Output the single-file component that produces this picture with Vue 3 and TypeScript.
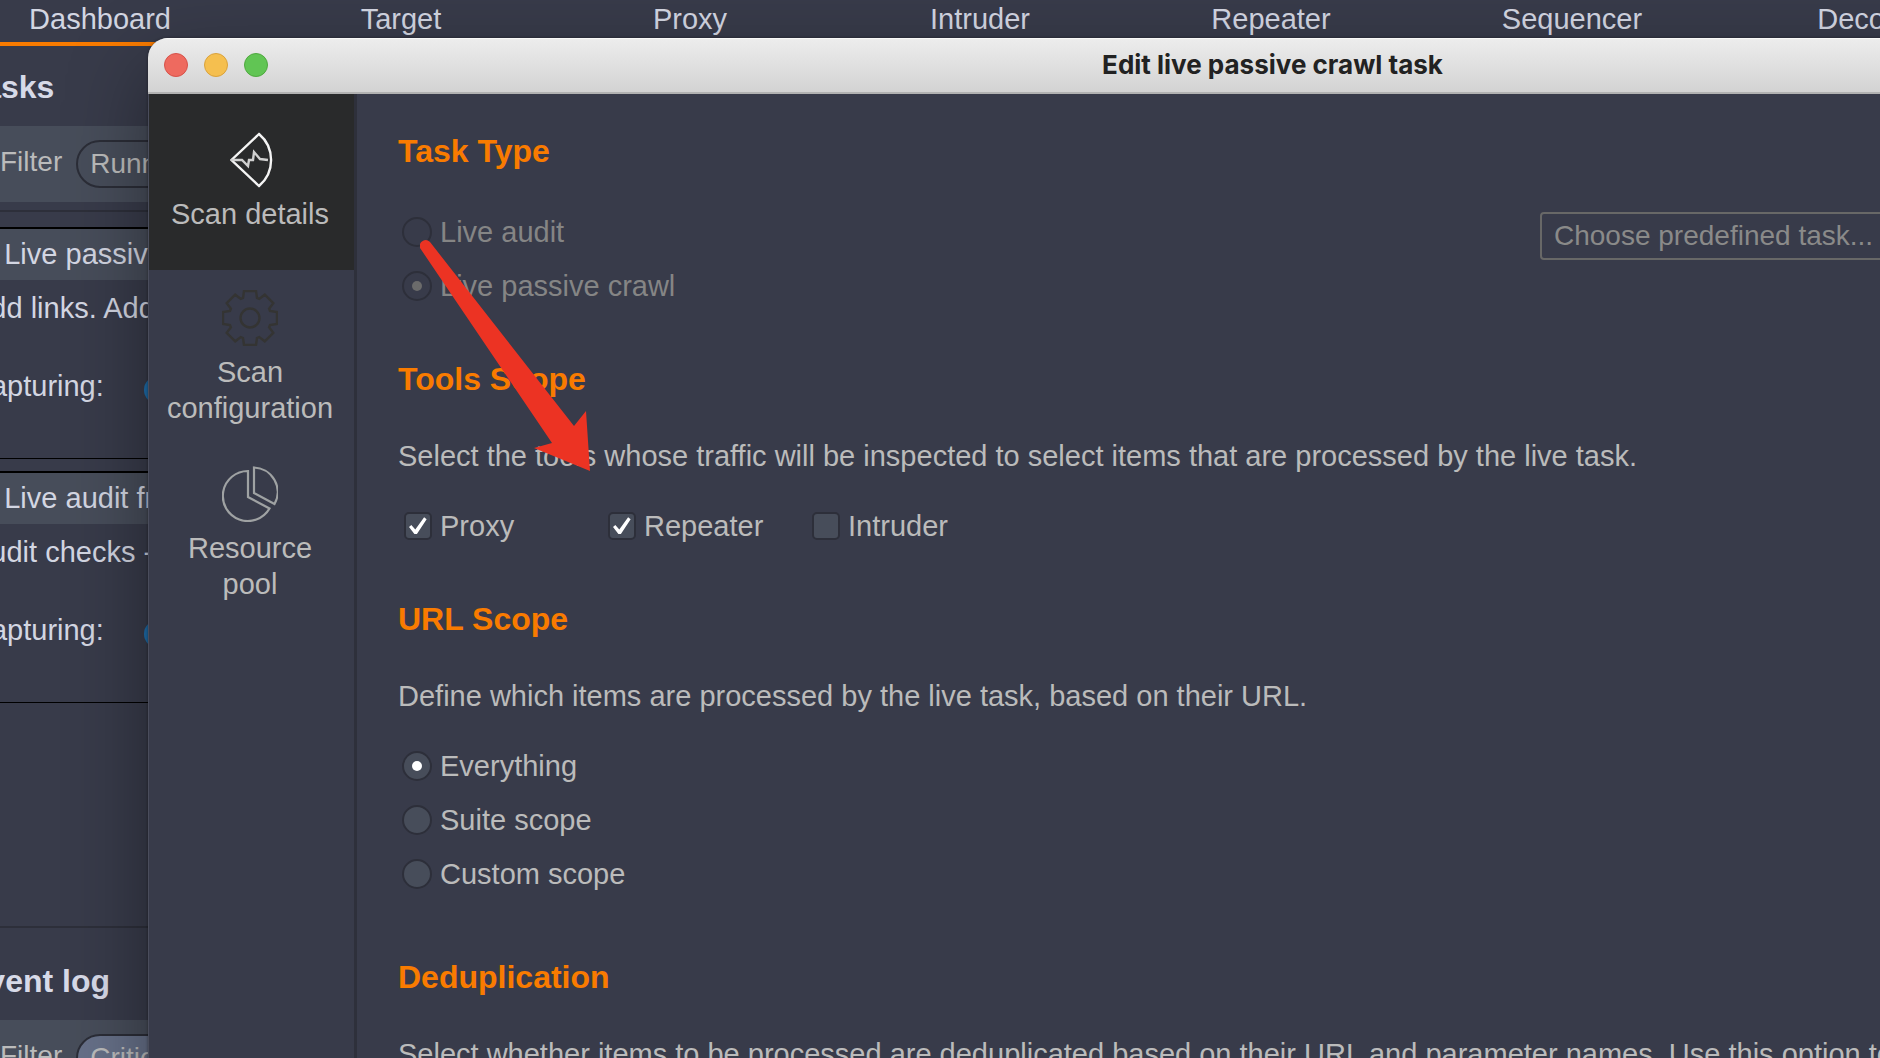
<script setup lang="ts">
import { ref } from 'vue'

interface Task {
  title: string
  detail: string
  capturing: boolean
}

interface Tool {
  name: string
  on: boolean
}

const tabs: string[] = ['Dashboard', 'Target', 'Proxy', 'Intruder', 'Repeater', 'Sequencer', 'Decoder']

const tasks = ref<Task[]>([
  { title: '1. Live passive', detail: 'Add links. Add', capturing: true },
  { title: '2. Live audit from', detail: 'Audit checks -', capturing: true },
])

const taskTypes: string[] = ['Live audit', 'Live passive crawl']
const taskType = ref('Live passive crawl')

const tools = ref<Tool[]>([
  { name: 'Proxy', on: true },
  { name: 'Repeater', on: true },
  { name: 'Intruder', on: false },
])

const scopes: string[] = ['Everything', 'Suite scope', 'Custom scope']
const scope = ref('Everything')

function gearOutline(teeth: number): string {
  const profile: [number, number][] = [[-7, -20], [-6, -27], [6, -27], [7, -20]]
  const points: string[] = []
  for (let i = 0; i < teeth; i++) {
    const a = (i * 2 * Math.PI) / teeth
    for (const [x, y] of profile) {
      const px = 28 + x * Math.cos(a) - y * Math.sin(a)
      const py = 28 + x * Math.sin(a) + y * Math.cos(a)
      points.push(`${px.toFixed(1)},${py.toFixed(1)}`)
    }
  }
  return points.join(' ')
}
const gear = gearOutline(8)
</script>

<template>
  <div class="desktop">
    <div class="suite">
      <nav class="tabs">
        <button v-for="(tab, i) in tabs" :key="tab" class="tab" :class="{ active: i === 0 }">{{ tab }}</button>
      </nav>

      <section class="panel tasks">
        <h2>Tasks</h2>
        <div class="filter">
          <span>Filter</span>
          <button class="chip">Running</button>
        </div>
        <div class="task-list">
          <article v-for="task in tasks" :key="task.title" class="task">
            <h3>{{ task.title }}</h3>
            <p>{{ task.detail }}</p>
            <label class="capture">
              <span>Capturing:</span>
              <input v-model="task.capturing" type="checkbox" class="switch" />
            </label>
          </article>
        </div>
      </section>

      <section class="panel events">
        <h2>Event log</h2>
        <div class="filter">
          <span>Filter</span>
          <button class="chip on">Critical</button>
        </div>
      </section>
    </div>

    <div class="dialog" role="dialog" aria-labelledby="dialog-title">
      <header class="titlebar">
        <div class="lights">
          <button class="light close" aria-label="Close"></button>
          <button class="light minimise" aria-label="Minimise"></button>
          <button class="light zoom" aria-label="Zoom"></button>
        </div>
        <h1 id="dialog-title">Edit live passive crawl task</h1>
      </header>

      <div class="body">
        <nav class="sidebar">
          <button class="step current">
            <svg class="icon" viewBox="0 0 56 56" fill="none" stroke="#f4f4f4" stroke-width="2.4">
              <path d="M37 2 L9.5 28 L37 54 A34 34 0 0 0 37 2 Z" />
              <path d="M9 28 H20 L26 34 L27 28 L31 28 L32 20 L38 27 L46 28" stroke="#d0d0d0" />
            </svg>
            <span>Scan details</span>
          </button>
          <button class="step">
            <svg class="icon" viewBox="0 0 56 56" fill="none" stroke="#343433" stroke-width="2.4">
              <polygon :points="gear" />
              <circle cx="28" cy="28" r="9.5" />
            </svg>
            <span>Scan configuration</span>
          </button>
          <button class="step">
            <svg class="icon" viewBox="0 0 56 56" fill="none" stroke="#9fa2a3" stroke-width="2.2">
              <path d="M26 5 A25 25 0 1 0 47.5 42.5 L26 31 Z" />
              <path d="M32 1.5 A24.5 24.5 0 0 1 52.5 38 L32 27 Z" />
            </svg>
            <span>Resource pool</span>
          </button>
        </nav>

        <main class="content">
          <section class="group">
            <h2>Task Type</h2>
            <div class="type-row">
              <div class="options">
                <label v-for="name in taskTypes" :key="name" class="option disabled">
                  <input v-model="taskType" type="radio" name="task-type" :value="name" disabled />
                  <span>{{ name }}</span>
                </label>
              </div>
              <button class="predefined" disabled>Choose predefined task...</button>
            </div>
          </section>

          <section class="group">
            <h2>Tools Scope</h2>
            <p>Select the tools whose traffic will be inspected to select items that are processed by the live task.</p>
            <div class="tools">
              <label v-for="tool in tools" :key="tool.name" class="option">
                <input v-model="tool.on" type="checkbox" />
                <span>{{ tool.name }}</span>
              </label>
            </div>
          </section>

          <section class="group last-choice">
            <h2>URL Scope</h2>
            <p>Define which items are processed by the live task, based on their URL.</p>
            <div class="options">
              <label v-for="name in scopes" :key="name" class="option">
                <input v-model="scope" type="radio" name="url-scope" :value="name" />
                <span>{{ name }}</span>
              </label>
            </div>
          </section>

          <section class="group">
            <h2>Deduplication</h2>
            <p>Select whether items to be processed are deduplicated based on their URL and parameter names. Use this option to</p>
          </section>
        </main>
      </div>
    </div>

    <svg class="pointer" viewBox="0 0 180 240" aria-hidden="true">
      <path d="M10 8 L154 192 L166 177 L170 237 L114 214 L132 209 L0 14 A6 6 0 0 1 10 8 Z" fill="#ec3323" />
    </svg>
  </div>
</template>

<style>
html,
body {
  margin: 0;
  background: #383b4a;
}
</style>

<style scoped>
.desktop {
  position: relative;
  height: 100vh;
  overflow: hidden;
  background: #383b4a;
  color: #bbbbbb;
  font-family: "Liberation Sans", Arial, sans-serif;
  font-size: 29px;
  line-height: 36px;
}

h1,
h2,
h3,
p {
  margin: 0;
}

button {
  margin: 0;
  padding: 0;
  border: 0;
  background: none;
  color: inherit;
  font: inherit;
}

/* Suite window behind the dialog */
.tabs {
  display: grid;
  grid-template-columns: 312px 290px 288px 292px 290px 312px 288px;
  margin-left: -56px;
  color: #d3d6e2;
}

.tab {
  height: 46px;
  padding-bottom: 5px;
  border-bottom: 4px solid transparent;
}

.tab.active {
  border-bottom-color: #f97b00;
}

.panel h2 {
  margin-left: -34px;
  color: #d7dae8;
  font-size: 32px;
  line-height: 40px;
}

.tasks {
  min-height: 859px;
  padding-top: 21px;
}

.events {
  padding-top: 33px;
  border-top: 2px solid #2d2f3a;
}

.filter {
  display: flex;
  gap: 12px;
  height: 76px;
  margin-top: 19px;
  box-sizing: border-box;
  padding: 14px 0;
  background: #474d5a;
  font-size: 28px;
}

.filter span {
  padding-top: 4px;
}

.chip {
  height: 48px;
  margin-left: 2px;
  padding: 0 12px;
  border: 2px solid #2b2d37;
  border-radius: 24px;
}

.chip.on {
  background: #667088;
}

.task-list {
  display: flex;
  flex-direction: column;
  gap: 12px;
  margin-top: 8px;
  padding-top: 15px;
  border-top: 2px solid #2d2f3a;
}

.task {
  border-top: 2px solid #000000;
  border-bottom: 1px solid #000000;
  color: #d3d6e2;
  padding-bottom: 54px;
  white-space: nowrap;
}

.task h3 {
  padding: 7px 0 8px;
  background: #474d5a;
  font-size: 29px;
  font-weight: 400;
  text-indent: -28px;
}

.task p {
  margin: 10px 0 42px -29px;
}

.capture {
  display: flex;
  align-items: center;
  gap: 40px;
  margin-left: -30px;
}

.switch {
  appearance: none;
  width: 52px;
  height: 28px;
  margin: 8px 0 0;
  border-radius: 14px;
  background: #1f6fae;
}

/* Dialog */
.dialog {
  position: absolute;
  top: 38px;
  right: -517px;
  bottom: -120px;
  left: 148px;
  display: flex;
  flex-direction: column;
  overflow: hidden;
  border-radius: 20px;
  background: #383b4a;
}

.suite::after {
  content: "";
  position: absolute;
  top: 38px;
  right: -517px;
  bottom: -120px;
  left: 148px;
  border-radius: 20px;
  box-shadow: 0 30px 80px rgba(0, 0, 0, 0.4), 0 0 3px rgba(0, 0, 0, 0.4);
}

.titlebar {
  display: grid;
  grid-template-columns: 1fr auto 1fr;
  align-items: center;
  height: 54px;
  border-bottom: 2px solid #b2b2b2;
  background: linear-gradient(#ededed, #d3d3d3);
  box-shadow: inset 0 1px 0 #f8f8f8;
}

.titlebar h1 {
  color: #222222;
  font-family: Inter, "Liberation Sans", sans-serif;
  font-size: 26px;
  font-weight: 700;
  line-height: 32px;
}

.lights {
  display: flex;
  gap: 16px;
  padding-left: 16px;
}

.light {
  width: 24px;
  height: 24px;
  border: 1px solid #d6524a;
  border-radius: 50%;
  background: #ee6a5f;
}

.light.minimise {
  border-color: #d9a23c;
  background: #f5bf4f;
}

.light.zoom {
  border-color: #4fa83f;
  background: #61c554;
}

.body {
  display: flex;
  flex: 1;
}

.sidebar {
  display: flex;
  flex-direction: column;
  flex: none;
  width: 205px;
  border-left: 1px solid #4a4d5c;
  border-right: 3px solid #2e303b;
}

.step {
  display: flex;
  flex-direction: column;
  align-items: center;
  gap: 8px;
  padding: 20px 16px 20px 13px;
  text-align: center;
}

.step.current {
  padding-top: 38px;
  padding-bottom: 38px;
  background: #292a2b;
}

.icon {
  width: 56px;
  height: 56px;
}

.content {
  flex: 1;
  padding: 37px 0 0 41px;
}

.group {
  margin-bottom: 46px;
}

.group.last-choice {
  margin-bottom: 56px;
}

.group h2 {
  color: #f97b00;
  font-size: 32px;
  line-height: 40px;
}

.group p {
  margin: 39px 0 25px;
}

.type-row {
  display: flex;
  justify-content: space-between;
  align-items: flex-start;
  margin-top: 34px;
}

.predefined {
  width: 370px;
  height: 48px;
  margin: 7px 487px 0 0;
  padding: 0 12px;
  border: 2px solid #686867;
  border-radius: 4px;
  color: #8a8a89;
  font-size: 28px;
  text-align: left;
}

.options {
  display: flex;
  flex-direction: column;
}

.tools {
  display: grid;
  grid-template-columns: repeat(3, 204px);
}

.option {
  display: flex;
  align-items: center;
  gap: 8px;
  height: 54px;
  padding-left: 4px;
}

.option.disabled {
  color: #858585;
}

.option input {
  appearance: none;
  display: grid;
  place-items: center;
  box-sizing: border-box;
  flex: none;
  width: 30px;
  height: 30px;
  margin: 0;
  border: 2px solid #2d2f3a;
  border-radius: 50%;
  background: #474d5a;
}

.option input[type="radio"]:checked::before {
  content: "";
  width: 10px;
  height: 10px;
  border-radius: 50%;
  background: #ffffff;
}

.option input[type="radio"]:disabled {
  background: none;
}

.option input[type="radio"]:disabled::before {
  background: #6b6b6b;
}

.option input[type="checkbox"] {
  width: 28px;
  height: 28px;
  margin-left: 2px;
  border-radius: 5px;
}

.option input[type="checkbox"]:checked::before {
  content: "";
  width: 18px;
  height: 18px;
  background: #ffffff;
  clip-path: polygon(0 56%, 13% 45%, 35% 70%, 84% 2%, 98% 12%, 44% 94%, 30% 94%);
}

.pointer {
  position: absolute;
  top: 234px;
  left: 420px;
  width: 180px;
  height: 240px;
  pointer-events: none;
}
</style>
